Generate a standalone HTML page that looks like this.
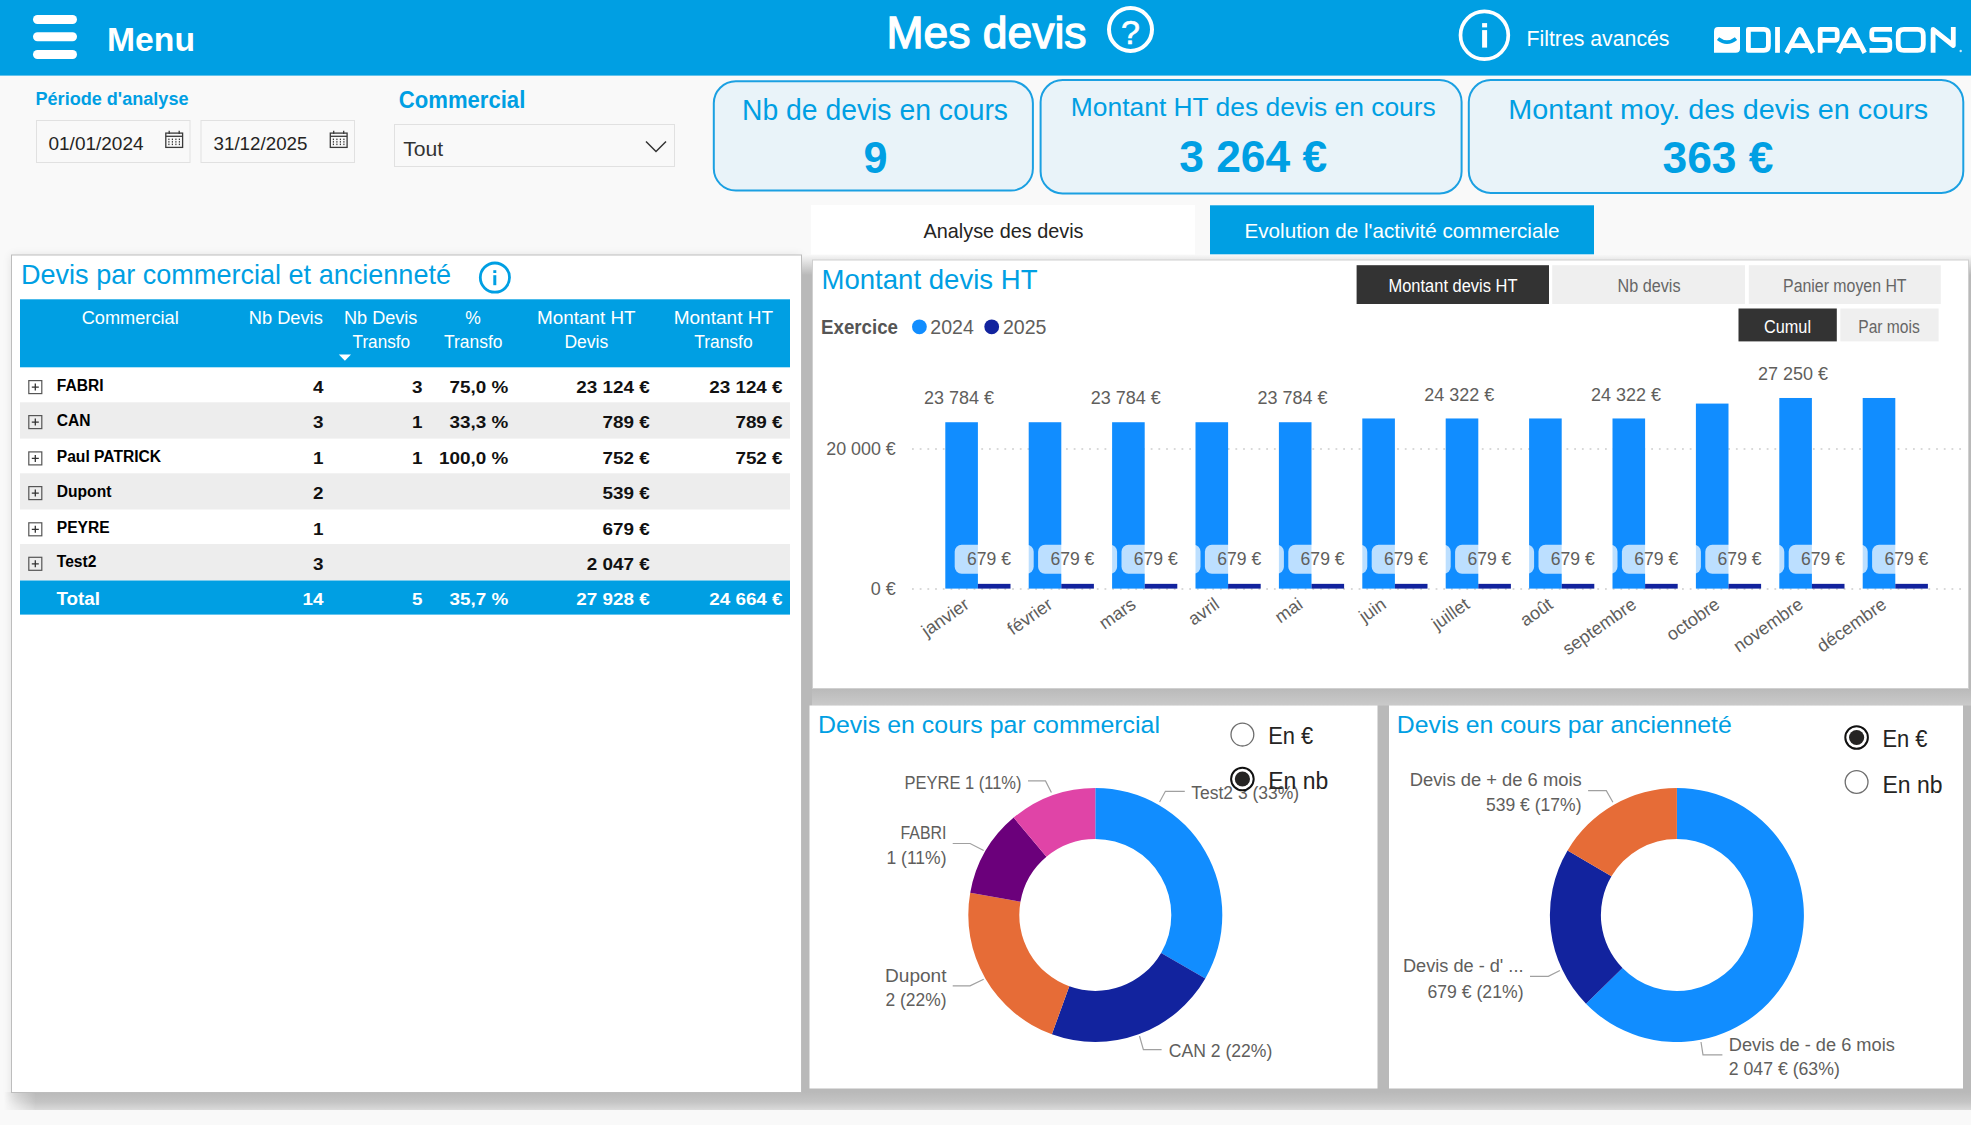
<!DOCTYPE html>
<html lang="fr"><head><meta charset="utf-8"><title>Mes devis</title>
<style>
html,body{margin:0;padding:0;width:1971px;height:1125px;overflow:hidden;background:#F9F9F9;}
svg{display:block;font-family:"Liberation Sans",sans-serif;}
</style></head><body>
<svg width="1971" height="1125" viewBox="0 0 1971 1125">
<rect x="0" y="0" width="1971" height="1125" fill="#F9F9F9" />
<rect x="0" y="0" width="1971" height="75.6" fill="#009FE3" />
<defs>
<linearGradient id="gtop" x1="0" y1="0" x2="0" y2="1"><stop offset="0" stop-color="#F7F7F7"/><stop offset="1" stop-color="#B9B9B9"/></linearGradient>
<linearGradient id="gbot" x1="0" y1="0" x2="0" y2="1"><stop offset="0" stop-color="#B9B9B9"/><stop offset="0.55" stop-color="#C4C4C4"/><stop offset="1" stop-color="#DADADA"/></linearGradient>
<linearGradient id="gleft" x1="0" y1="0" x2="1" y2="0"><stop offset="0" stop-color="#F9F9F9"/><stop offset="1" stop-color="#BBBBBB"/></linearGradient>
<linearGradient id="gside" x1="0" y1="0" x2="1" y2="0"><stop offset="0" stop-color="#F9F9F9"/><stop offset="1" stop-color="#EFEFEF"/></linearGradient>
</defs>
<filter id="sblur" x="-5%" y="-5%" width="110%" height="110%"><feGaussianBlur stdDeviation="5"/></filter>
<rect x="11" y="255" width="790" height="845" fill="#000" opacity="0.09" filter="url(#sblur)"/>
<rect x="802" y="255" width="1169" height="20" fill="url(#gtop)" />
<rect x="802" y="275" width="1169" height="818" fill="#B9B9B9" />
<linearGradient id="ggap" x1="0" y1="0" x2="0" y2="1"><stop offset="0" stop-color="#B9B9B9"/><stop offset="1" stop-color="#CACACA"/></linearGradient>
<rect x="812" y="688" width="1159" height="17.5" fill="url(#ggap)" />
<mask id="mleft"><rect x="0" y="1080" width="1971" height="40" fill="url(#gmask)"/></mask>
<linearGradient id="gmask" x1="0" y1="0" x2="1971" y2="0" gradientUnits="userSpaceOnUse"><stop offset="0.002" stop-color="#000"/><stop offset="0.018" stop-color="#fff"/></linearGradient>
<rect x="0" y="1092" width="1971" height="18" fill="url(#gbot)" mask="url(#mleft)"/>
<rect x="11.5" y="255" width="790" height="837.5" fill="#FFFFFF" stroke="#BDBDBD" stroke-width="1"/>
<rect x="811" y="205" width="384" height="49.5" fill="#FFFFFF" />
<rect x="1210" y="205.3" width="384" height="49" fill="#009FE3" />
<rect x="812.5" y="260" width="1156" height="428.5" fill="#FFFFFF" stroke="#D0D0D0" stroke-width="1"/>
<rect x="809.5" y="705.5" width="568" height="383" fill="#FFFFFF" />
<rect x="1389" y="705.5" width="574" height="383" fill="#FFFFFF" />
<rect x="33" y="15" width="44" height="9" rx="4.5" fill="#fff"/>
<rect x="33" y="32.3" width="44" height="9" rx="4.5" fill="#fff"/>
<rect x="33" y="50" width="44" height="9" rx="4.5" fill="#fff"/>
<text x="107" y="51.4" font-size="34" fill="#fff" font-weight="700" text-anchor="start" textLength="88" lengthAdjust="spacingAndGlyphs" >Menu</text>
<text x="886.5" y="47.9" font-size="44.5" fill="#fff" font-weight="400" text-anchor="start" textLength="200" lengthAdjust="spacingAndGlyphs" stroke="#fff" stroke-width="1.3">Mes devis</text>
<circle cx="1130.5" cy="29.5" r="21.5" fill="none" stroke="#fff" stroke-width="4"/>
<text x="1130.5" y="43.5" font-size="34" fill="#fff" font-weight="400" text-anchor="middle" stroke="#fff" stroke-width="0.6">?</text>
<circle cx="1484.4" cy="35.3" r="23.9" fill="none" stroke="#fff" stroke-width="3.7"/>
<rect x="1482.1" y="23.1" width="5" height="4.3" fill="#fff"/><rect x="1482.1" y="30.1" width="5" height="17.5" fill="#fff"/>
<text x="1526.5" y="45.8" font-size="22.5" fill="#fff" font-weight="400" text-anchor="start" textLength="143" lengthAdjust="spacingAndGlyphs" >Filtres avancés</text>
<g fill="#fff">
<path d="M1718 27 H1740 V48.5 Q1740 52.8 1735.7 52.8 H1714 V31.3 Q1714 27 1718 27 Z"/>
</g>
<path d="M1718 38.6 Q1727 45.5 1736 38.6" fill="none" stroke="#009FE3" stroke-width="3.6"/>
<g fill="none" stroke="#fff" stroke-width="4.8" stroke-linejoin="round">
<path d="M1748.4 29.4 H1764 Q1768.4 29.4 1768.4 34 V45.8 Q1768.4 50.4 1764 50.4 H1748.4 Z"/>
<path d="M1777.5 27 V52.8"/>
<path d="M1786.5 52.8 L1798.6 30.2 Q1799.8 28.6 1801.2 30.2 L1813 52.8 M1791.5 45.7 H1808.5"/>
<path d="M1820.2 52.8 V29.4 H1834.5 Q1837.2 29.4 1837.2 32.2 V37.4 Q1837.2 40.3 1834.5 40.3 H1820.2"/>
<path d="M1838.2 52.8 L1850.3 30.2 Q1851.5 28.6 1852.9 30.2 L1864.7 52.8 M1843.2 45.7 H1860.2"/>
<path d="M1892 29.4 H1874.5 Q1871.8 29.4 1871.8 32.2 V36.8 Q1871.8 39.6 1874.5 39.6 H1887 Q1889.8 39.6 1889.8 42.4 V47.6 Q1889.8 50.4 1887 50.4 H1869.5"/>
<path d="M1904 29.4 H1917.5 Q1923.3 29.4 1923.3 35.4 V44.4 Q1923.3 50.4 1917.5 50.4 H1904 Q1898.2 50.4 1898.2 44.4 V35.4 Q1898.2 29.4 1904 29.4 Z"/>
<path d="M1933.1 52.8 V29.4 L1953.3 45.5 V27"/>
</g>
<circle cx="1960.7" cy="51" r="1.2" fill="#cfe9f8"/>
<text x="35.5" y="104.9" font-size="18.7" fill="#009FE3" font-weight="700" text-anchor="start" textLength="153" lengthAdjust="spacingAndGlyphs" >Période d'analyse</text>
<rect x="36.5" y="120.5" width="153.5" height="42" fill="#F9F9F9" stroke="#E1E1E1" stroke-width="1"/>
<text x="48.5" y="149.6" font-size="18.2" fill="#252423" font-weight="400" text-anchor="start" textLength="95" lengthAdjust="spacingAndGlyphs" >01/01/2024</text>
<g fill="none" stroke="#3A3A3A" stroke-width="1.3"><rect x="165.79999999999998" y="133.1" width="16.8" height="14.3"/><line x1="165.79999999999998" y1="136.3" x2="182.6" y2="136.3"/><line x1="169.2" y1="130.8" x2="169.2" y2="134"/><line x1="179.2" y1="130.8" x2="179.2" y2="134"/></g><rect x="168.29999999999998" y="138.6" width="1.2" height="1.5" fill="#3A3A3A"/><rect x="168.29999999999998" y="141.1" width="1.2" height="1.5" fill="#3A3A3A"/><rect x="168.29999999999998" y="143.6" width="1.2" height="1.5" fill="#3A3A3A"/><rect x="171.79999999999998" y="138.6" width="1.2" height="1.5" fill="#3A3A3A"/><rect x="171.79999999999998" y="141.1" width="1.2" height="1.5" fill="#3A3A3A"/><rect x="171.79999999999998" y="143.6" width="1.2" height="1.5" fill="#3A3A3A"/><rect x="175.29999999999998" y="138.6" width="1.2" height="1.5" fill="#3A3A3A"/><rect x="175.29999999999998" y="141.1" width="1.2" height="1.5" fill="#3A3A3A"/><rect x="175.29999999999998" y="143.6" width="1.2" height="1.5" fill="#3A3A3A"/><rect x="178.79999999999998" y="138.6" width="1.2" height="1.5" fill="#3A3A3A"/><rect x="178.79999999999998" y="141.1" width="1.2" height="1.5" fill="#3A3A3A"/><rect x="178.79999999999998" y="143.6" width="1.2" height="1.5" fill="#3A3A3A"/>
<rect x="201.0" y="120.5" width="153.5" height="42" fill="#F9F9F9" stroke="#E1E1E1" stroke-width="1"/>
<text x="213.5" y="149.6" font-size="18.2" fill="#252423" font-weight="400" text-anchor="start" textLength="94" lengthAdjust="spacingAndGlyphs" >31/12/2025</text>
<g fill="none" stroke="#3A3A3A" stroke-width="1.3"><rect x="330.3" y="133.1" width="16.8" height="14.3"/><line x1="330.3" y1="136.3" x2="347.09999999999997" y2="136.3"/><line x1="333.7" y1="130.8" x2="333.7" y2="134"/><line x1="343.7" y1="130.8" x2="343.7" y2="134"/></g><rect x="332.8" y="138.6" width="1.2" height="1.5" fill="#3A3A3A"/><rect x="332.8" y="141.1" width="1.2" height="1.5" fill="#3A3A3A"/><rect x="332.8" y="143.6" width="1.2" height="1.5" fill="#3A3A3A"/><rect x="336.3" y="138.6" width="1.2" height="1.5" fill="#3A3A3A"/><rect x="336.3" y="141.1" width="1.2" height="1.5" fill="#3A3A3A"/><rect x="336.3" y="143.6" width="1.2" height="1.5" fill="#3A3A3A"/><rect x="339.8" y="138.6" width="1.2" height="1.5" fill="#3A3A3A"/><rect x="339.8" y="141.1" width="1.2" height="1.5" fill="#3A3A3A"/><rect x="339.8" y="143.6" width="1.2" height="1.5" fill="#3A3A3A"/><rect x="343.3" y="138.6" width="1.2" height="1.5" fill="#3A3A3A"/><rect x="343.3" y="141.1" width="1.2" height="1.5" fill="#3A3A3A"/><rect x="343.3" y="143.6" width="1.2" height="1.5" fill="#3A3A3A"/>
<text x="398.8" y="108.1" font-size="23.3" fill="#009FE3" font-weight="700" text-anchor="start" textLength="126.5" lengthAdjust="spacingAndGlyphs" >Commercial</text>
<rect x="394.5" y="124.5" width="280" height="42" fill="#F9F9F9" stroke="#E1E1E1" stroke-width="1"/>
<text x="403.2" y="155.5" font-size="20.4" fill="#333" font-weight="400" text-anchor="start" textLength="40" lengthAdjust="spacingAndGlyphs" >Tout</text>
<path d="M646 141.5 L656 151.5 L666 141.5" fill="none" stroke="#333" stroke-width="1.5"/>
<rect x="713.8" y="81.3" width="319.10000000000014" height="109.3" rx="22" fill="#E9F3F9" stroke="#1BA0E2" stroke-width="2"/>
<rect x="1040.6" y="80.1" width="421.0" height="113.30000000000001" rx="22" fill="#E9F3F9" stroke="#1BA0E2" stroke-width="2"/>
<rect x="1468.8" y="80.1" width="494.5" height="112.80000000000001" rx="22" fill="#E9F3F9" stroke="#1BA0E2" stroke-width="2"/>
<text x="742" y="120.0" font-size="29" fill="#009FE3" font-weight="400" text-anchor="start" textLength="266" lengthAdjust="spacingAndGlyphs" >Nb de devis en cours</text>
<text x="863.5" y="173.0" font-size="44" fill="#009FE3" font-weight="700" text-anchor="start" textLength="24" lengthAdjust="spacingAndGlyphs" >9</text>
<text x="1070.8" y="116.3" font-size="26.5" fill="#009FE3" font-weight="400" text-anchor="start" textLength="365" lengthAdjust="spacingAndGlyphs" >Montant HT des devis en cours</text>
<text x="1179.2" y="171.6" font-size="43.7" fill="#009FE3" font-weight="700" text-anchor="start" textLength="148" lengthAdjust="spacingAndGlyphs" >3 264 €</text>
<text x="1508.2" y="118.7" font-size="28" fill="#009FE3" font-weight="400" text-anchor="start" textLength="420" lengthAdjust="spacingAndGlyphs" >Montant moy. des devis en cours</text>
<text x="1662.5" y="173.2" font-size="43.6" fill="#009FE3" font-weight="700" text-anchor="start" textLength="111" lengthAdjust="spacingAndGlyphs" >363 €</text>
<text x="923.5" y="237.6" font-size="20.4" fill="#252423" font-weight="400" text-anchor="start" textLength="160" lengthAdjust="spacingAndGlyphs" >Analyse des devis</text>
<text x="1244.5" y="237.6" font-size="20.4" fill="#fff" font-weight="400" text-anchor="start" textLength="315" lengthAdjust="spacingAndGlyphs" >Evolution de l'activité commerciale</text>
<text x="21" y="284.3" font-size="27.2" fill="#009FE3" font-weight="400" text-anchor="start" textLength="430" lengthAdjust="spacingAndGlyphs" >Devis par commercial et ancienneté</text>
<circle cx="494.9" cy="277.6" r="14.6" fill="none" stroke="#009FE3" stroke-width="2.8"/>
<rect x="493.3" y="270.2" width="3" height="2.8" fill="#009FE3"/><rect x="493.3" y="275.2" width="3" height="10" fill="#009FE3"/>
<rect x="20" y="299.3" width="770" height="68" fill="#009FE3" />
<text x="130.2" y="323.5" font-size="17.5" fill="#fff" font-weight="400" text-anchor="middle" textLength="97" lengthAdjust="spacingAndGlyphs" >Commercial</text>
<text x="285.8" y="323.5" font-size="17.5" fill="#fff" font-weight="400" text-anchor="middle" textLength="74" lengthAdjust="spacingAndGlyphs" >Nb Devis</text>
<text x="380.7" y="323.5" font-size="17.5" fill="#fff" font-weight="400" text-anchor="middle" textLength="73.5" lengthAdjust="spacingAndGlyphs" >Nb Devis</text>
<text x="381.3" y="348.3" font-size="17.5" fill="#fff" font-weight="400" text-anchor="middle" textLength="57.5" lengthAdjust="spacingAndGlyphs" >Transfo</text>
<text x="473" y="323.5" font-size="17.5" fill="#fff" font-weight="400" text-anchor="middle" >%</text>
<text x="473.2" y="348.3" font-size="17.5" fill="#fff" font-weight="400" text-anchor="middle" textLength="58.5" lengthAdjust="spacingAndGlyphs" >Transfo</text>
<text x="586.3" y="323.5" font-size="17.5" fill="#fff" font-weight="400" text-anchor="middle" textLength="98.5" lengthAdjust="spacingAndGlyphs" >Montant HT</text>
<text x="586.3" y="348.3" font-size="17.5" fill="#fff" font-weight="400" text-anchor="middle" >Devis</text>
<text x="723.4" y="323.5" font-size="17.5" fill="#fff" font-weight="400" text-anchor="middle" textLength="99.5" lengthAdjust="spacingAndGlyphs" >Montant HT</text>
<text x="723.4" y="348.3" font-size="17.5" fill="#fff" font-weight="400" text-anchor="middle" textLength="58.5" lengthAdjust="spacingAndGlyphs" >Transfo</text>
<path d="M338.8 354.4 L351 354.4 L344.9 360.8 Z" fill="#fff"/>
<rect x="28.8" y="380.6" width="13" height="13" fill="none" stroke="#555" stroke-width="1.2"/><path d="M31.8 387.1 H38.8 M35.3 383.6 V390.6" stroke="#333" stroke-width="1.3"/>
<text x="56.8" y="390.5" font-size="15.6" fill="#000" font-weight="700" text-anchor="start" >FABRI</text>
<text x="323.40000000000003" y="393.0" font-size="17.3" fill="#111" font-weight="700" text-anchor="end" textLength="10.5" lengthAdjust="spacingAndGlyphs" >4</text>
<text x="422.5" y="393.0" font-size="17.3" fill="#111" font-weight="700" text-anchor="end" textLength="10.5" lengthAdjust="spacingAndGlyphs" >3</text>
<text x="508.2" y="393.0" font-size="17.3" fill="#111" font-weight="700" text-anchor="end" textLength="58.7" lengthAdjust="spacingAndGlyphs" >75,0 %</text>
<text x="649.6999999999999" y="393.0" font-size="17.3" fill="#111" font-weight="700" text-anchor="end" textLength="73.4" lengthAdjust="spacingAndGlyphs" >23 124 €</text>
<text x="782.5999999999999" y="393.0" font-size="17.3" fill="#111" font-weight="700" text-anchor="end" textLength="73.4" lengthAdjust="spacingAndGlyphs" >23 124 €</text>
<rect x="20" y="402.3" width="770" height="36.30000000000001" fill="#EDEDED" />
<rect x="28.8" y="415.6" width="13" height="13" fill="none" stroke="#555" stroke-width="1.2"/><path d="M31.8 422.1 H38.8 M35.3 418.6 V425.6" stroke="#333" stroke-width="1.3"/>
<text x="56.8" y="425.5" font-size="15.6" fill="#000" font-weight="700" text-anchor="start" >CAN</text>
<text x="323.40000000000003" y="428.0" font-size="17.3" fill="#111" font-weight="700" text-anchor="end" textLength="10.5" lengthAdjust="spacingAndGlyphs" >3</text>
<text x="422.5" y="428.0" font-size="17.3" fill="#111" font-weight="700" text-anchor="end" textLength="10.5" lengthAdjust="spacingAndGlyphs" >1</text>
<text x="508.2" y="428.0" font-size="17.3" fill="#111" font-weight="700" text-anchor="end" textLength="58.7" lengthAdjust="spacingAndGlyphs" >33,3 %</text>
<text x="649.6999999999999" y="428.0" font-size="17.3" fill="#111" font-weight="700" text-anchor="end" textLength="47.2" lengthAdjust="spacingAndGlyphs" >789 €</text>
<text x="782.5999999999999" y="428.0" font-size="17.3" fill="#111" font-weight="700" text-anchor="end" textLength="47.2" lengthAdjust="spacingAndGlyphs" >789 €</text>
<rect x="28.8" y="451.90000000000003" width="13" height="13" fill="none" stroke="#555" stroke-width="1.2"/><path d="M31.8 458.40000000000003 H38.8 M35.3 454.90000000000003 V461.90000000000003" stroke="#333" stroke-width="1.3"/>
<text x="56.8" y="461.8" font-size="15.6" fill="#000" font-weight="700" text-anchor="start" >Paul PATRICK</text>
<text x="323.40000000000003" y="464.3" font-size="17.3" fill="#111" font-weight="700" text-anchor="end" textLength="10.5" lengthAdjust="spacingAndGlyphs" >1</text>
<text x="422.5" y="464.3" font-size="17.3" fill="#111" font-weight="700" text-anchor="end" textLength="10.5" lengthAdjust="spacingAndGlyphs" >1</text>
<text x="508.2" y="464.3" font-size="17.3" fill="#111" font-weight="700" text-anchor="end" textLength="69.2" lengthAdjust="spacingAndGlyphs" >100,0 %</text>
<text x="649.6999999999999" y="464.3" font-size="17.3" fill="#111" font-weight="700" text-anchor="end" textLength="47.2" lengthAdjust="spacingAndGlyphs" >752 €</text>
<text x="782.5999999999999" y="464.3" font-size="17.3" fill="#111" font-weight="700" text-anchor="end" textLength="47.2" lengthAdjust="spacingAndGlyphs" >752 €</text>
<rect x="20" y="473.3" width="770" height="36.19999999999999" fill="#EDEDED" />
<rect x="28.8" y="486.6" width="13" height="13" fill="none" stroke="#555" stroke-width="1.2"/><path d="M31.8 493.1 H38.8 M35.3 489.6 V496.6" stroke="#333" stroke-width="1.3"/>
<text x="56.8" y="496.5" font-size="15.6" fill="#000" font-weight="700" text-anchor="start" >Dupont</text>
<text x="323.40000000000003" y="499.0" font-size="17.3" fill="#111" font-weight="700" text-anchor="end" textLength="10.5" lengthAdjust="spacingAndGlyphs" >2</text>
<text x="649.6999999999999" y="499.0" font-size="17.3" fill="#111" font-weight="700" text-anchor="end" textLength="47.2" lengthAdjust="spacingAndGlyphs" >539 €</text>
<rect x="28.8" y="522.8" width="13" height="13" fill="none" stroke="#555" stroke-width="1.2"/><path d="M31.8 529.3 H38.8 M35.3 525.8 V532.8" stroke="#333" stroke-width="1.3"/>
<text x="56.8" y="532.7" font-size="15.6" fill="#000" font-weight="700" text-anchor="start" >PEYRE</text>
<text x="323.40000000000003" y="535.2" font-size="17.3" fill="#111" font-weight="700" text-anchor="end" textLength="10.5" lengthAdjust="spacingAndGlyphs" >1</text>
<text x="649.6999999999999" y="535.2" font-size="17.3" fill="#111" font-weight="700" text-anchor="end" textLength="47.2" lengthAdjust="spacingAndGlyphs" >679 €</text>
<rect x="20" y="544.0" width="770" height="36.5" fill="#EDEDED" />
<rect x="28.8" y="557.3" width="13" height="13" fill="none" stroke="#555" stroke-width="1.2"/><path d="M31.8 563.8 H38.8 M35.3 560.3 V567.3" stroke="#333" stroke-width="1.3"/>
<text x="56.8" y="567.2" font-size="15.6" fill="#000" font-weight="700" text-anchor="start" >Test2</text>
<text x="323.40000000000003" y="569.7" font-size="17.3" fill="#111" font-weight="700" text-anchor="end" textLength="10.5" lengthAdjust="spacingAndGlyphs" >3</text>
<text x="649.6999999999999" y="569.7" font-size="17.3" fill="#111" font-weight="700" text-anchor="end" textLength="62.9" lengthAdjust="spacingAndGlyphs" >2 047 €</text>
<rect x="20" y="580.5" width="770" height="34.1" fill="#009FE3" />
<text x="56.5" y="605.3" font-size="18" fill="#fff" font-weight="700" text-anchor="start" textLength="43.5" lengthAdjust="spacingAndGlyphs" >Total</text>
<text x="323.40000000000003" y="605.3" font-size="17.3" fill="#fff" font-weight="700" text-anchor="end" textLength="21.0" lengthAdjust="spacingAndGlyphs" >14</text>
<text x="422.5" y="605.3" font-size="17.3" fill="#fff" font-weight="700" text-anchor="end" textLength="10.5" lengthAdjust="spacingAndGlyphs" >5</text>
<text x="508.2" y="605.3" font-size="17.3" fill="#fff" font-weight="700" text-anchor="end" textLength="58.7" lengthAdjust="spacingAndGlyphs" >35,7 %</text>
<text x="649.6999999999999" y="605.3" font-size="17.3" fill="#fff" font-weight="700" text-anchor="end" textLength="73.4" lengthAdjust="spacingAndGlyphs" >27 928 €</text>
<text x="782.5999999999999" y="605.3" font-size="17.3" fill="#fff" font-weight="700" text-anchor="end" textLength="73.4" lengthAdjust="spacingAndGlyphs" >24 664 €</text>
<text x="821.5" y="289.2" font-size="27.2" fill="#009FE3" font-weight="400" text-anchor="start" textLength="216" lengthAdjust="spacingAndGlyphs" >Montant devis HT</text>
<rect x="1356.6" y="265.2" width="192.4" height="38.8" fill="#333333" />
<rect x="1552.2" y="265.2" width="192.8" height="38.8" fill="#EFEFEF" />
<rect x="1748.8" y="265.2" width="192" height="38.8" fill="#EFEFEF" />
<text x="1453" y="291.9" font-size="17.5" fill="#fff" font-weight="400" text-anchor="middle" textLength="129" lengthAdjust="spacingAndGlyphs" >Montant devis HT</text>
<text x="1649" y="291.9" font-size="17.5" fill="#666" font-weight="400" text-anchor="middle" textLength="63" lengthAdjust="spacingAndGlyphs" >Nb devis</text>
<text x="1844.8" y="291.9" font-size="17.5" fill="#666" font-weight="400" text-anchor="middle" textLength="123.5" lengthAdjust="spacingAndGlyphs" >Panier moyen HT</text>
<rect x="1738.5" y="308.5" width="98.3" height="32.9" fill="#333333" />
<rect x="1840.3" y="308.5" width="98.3" height="32.9" fill="#EFEFEF" />
<text x="1787.5" y="332.5" font-size="17.5" fill="#fff" font-weight="400" text-anchor="middle" textLength="47" lengthAdjust="spacingAndGlyphs" >Cumul</text>
<text x="1889" y="332.5" font-size="17.5" fill="#666" font-weight="400" text-anchor="middle" textLength="61.5" lengthAdjust="spacingAndGlyphs" >Par mois</text>
<text x="821" y="334.1" font-size="19.5" fill="#555" font-weight="700" text-anchor="start" textLength="77" lengthAdjust="spacingAndGlyphs" >Exercice</text>
<circle cx="919.4" cy="326.8" r="7.4" fill="#118DFF"/><circle cx="991.7" cy="326.8" r="7.4" fill="#12239E"/>
<text x="930.3" y="334.1" font-size="19.5" fill="#605E5C" font-weight="400" text-anchor="start" textLength="43.5" lengthAdjust="spacingAndGlyphs" >2024</text>
<text x="1002.9" y="334.1" font-size="19.5" fill="#605E5C" font-weight="400" text-anchor="start" textLength="43.5" lengthAdjust="spacingAndGlyphs" >2025</text>
<g stroke="#CDCDCD" stroke-width="1.6" stroke-dasharray="1.8 5.9"><line x1="912" y1="449" x2="1965" y2="449"/><line x1="912" y1="589" x2="1965" y2="589"/></g>
<text x="895.8" y="454.5" font-size="18" fill="#605E5C" font-weight="400" text-anchor="end" textLength="69.5" lengthAdjust="spacingAndGlyphs" >20 000 €</text>
<text x="895.8" y="594.5" font-size="18" fill="#605E5C" font-weight="400" text-anchor="end" textLength="25" lengthAdjust="spacingAndGlyphs" >0 €</text>
<rect x="945.3" y="422.23092" width="32.6" height="166.36908" fill="#118DFF" />
<rect x="977.9" y="583.850395" width="32.6" height="4.749605" fill="#12239E" />
<rect x="1028.7" y="422.23092" width="32.6" height="166.36908" fill="#118DFF" />
<rect x="1061.3" y="583.850395" width="32.6" height="4.749605" fill="#12239E" />
<rect x="1112.1" y="422.23092" width="32.6" height="166.36908" fill="#118DFF" />
<rect x="1144.6999999999998" y="583.850395" width="32.6" height="4.749605" fill="#12239E" />
<rect x="1195.5" y="422.23092" width="32.6" height="166.36908" fill="#118DFF" />
<rect x="1228.1" y="583.850395" width="32.6" height="4.749605" fill="#12239E" />
<rect x="1278.9" y="422.23092" width="32.6" height="166.36908" fill="#118DFF" />
<rect x="1311.5" y="583.850395" width="32.6" height="4.749605" fill="#12239E" />
<rect x="1362.3" y="418.46761000000004" width="32.6" height="170.13239000000002" fill="#118DFF" />
<rect x="1394.8999999999999" y="583.850395" width="32.6" height="4.749605" fill="#12239E" />
<rect x="1445.7" y="418.46761000000004" width="32.6" height="170.13239000000002" fill="#118DFF" />
<rect x="1478.3" y="583.850395" width="32.6" height="4.749605" fill="#12239E" />
<rect x="1529.1" y="418.46761000000004" width="32.6" height="170.13239000000002" fill="#118DFF" />
<rect x="1561.6999999999998" y="583.850395" width="32.6" height="4.749605" fill="#12239E" />
<rect x="1612.5" y="418.46761000000004" width="32.6" height="170.13239000000002" fill="#118DFF" />
<rect x="1645.1" y="583.850395" width="32.6" height="4.749605" fill="#12239E" />
<rect x="1695.9" y="403.58225000000004" width="32.6" height="185.01775" fill="#118DFF" />
<rect x="1728.5" y="583.850395" width="32.6" height="4.749605" fill="#12239E" />
<rect x="1779.3" y="397.98625000000004" width="32.6" height="190.61375" fill="#118DFF" />
<rect x="1811.8999999999999" y="583.850395" width="32.6" height="4.749605" fill="#12239E" />
<rect x="1862.7" y="397.98625000000004" width="32.6" height="190.61375" fill="#118DFF" />
<rect x="1895.3" y="583.850395" width="32.6" height="4.749605" fill="#12239E" />
<rect x="954.6999999999999" y="544.8" width="79" height="29" rx="7" fill="#fff" fill-opacity="0.72"/>
<text x="988.9999999999999" y="565.3" font-size="18" fill="#605E5C" font-weight="400" text-anchor="middle" textLength="44" lengthAdjust="spacingAndGlyphs" >679 €</text>
<text x="958.9" y="403.7" font-size="18" fill="#605E5C" font-weight="400" text-anchor="middle" textLength="70" lengthAdjust="spacingAndGlyphs" >23 784 €</text>
<text transform="translate(970.4,607) rotate(-35)" font-size="18" fill="#605E5C" text-anchor="end">janvier</text>
<rect x="1038.1" y="544.8" width="79" height="29" rx="7" fill="#fff" fill-opacity="0.72"/>
<text x="1072.3999999999999" y="565.3" font-size="18" fill="#605E5C" font-weight="400" text-anchor="middle" textLength="44" lengthAdjust="spacingAndGlyphs" >679 €</text>
<text transform="translate(1053.8,607) rotate(-35)" font-size="18" fill="#605E5C" text-anchor="end">février</text>
<rect x="1121.4999999999998" y="544.8" width="79" height="29" rx="7" fill="#fff" fill-opacity="0.72"/>
<text x="1155.7999999999997" y="565.3" font-size="18" fill="#605E5C" font-weight="400" text-anchor="middle" textLength="44" lengthAdjust="spacingAndGlyphs" >679 €</text>
<text x="1125.6999999999998" y="403.7" font-size="18" fill="#605E5C" font-weight="400" text-anchor="middle" textLength="70" lengthAdjust="spacingAndGlyphs" >23 784 €</text>
<text transform="translate(1137.1999999999998,607) rotate(-35)" font-size="18" fill="#605E5C" text-anchor="end">mars</text>
<rect x="1204.8999999999999" y="544.8" width="79" height="29" rx="7" fill="#fff" fill-opacity="0.72"/>
<text x="1239.1999999999998" y="565.3" font-size="18" fill="#605E5C" font-weight="400" text-anchor="middle" textLength="44" lengthAdjust="spacingAndGlyphs" >679 €</text>
<text transform="translate(1220.6,607) rotate(-35)" font-size="18" fill="#605E5C" text-anchor="end">avril</text>
<rect x="1288.3" y="544.8" width="79" height="29" rx="7" fill="#fff" fill-opacity="0.72"/>
<text x="1322.6" y="565.3" font-size="18" fill="#605E5C" font-weight="400" text-anchor="middle" textLength="44" lengthAdjust="spacingAndGlyphs" >679 €</text>
<text x="1292.5" y="403.7" font-size="18" fill="#605E5C" font-weight="400" text-anchor="middle" textLength="70" lengthAdjust="spacingAndGlyphs" >23 784 €</text>
<text transform="translate(1304.0,607) rotate(-35)" font-size="18" fill="#605E5C" text-anchor="end">mai</text>
<rect x="1371.6999999999998" y="544.8" width="79" height="29" rx="7" fill="#fff" fill-opacity="0.72"/>
<text x="1405.9999999999998" y="565.3" font-size="18" fill="#605E5C" font-weight="400" text-anchor="middle" textLength="44" lengthAdjust="spacingAndGlyphs" >679 €</text>
<text transform="translate(1387.3999999999999,607) rotate(-35)" font-size="18" fill="#605E5C" text-anchor="end">juin</text>
<rect x="1455.1" y="544.8" width="79" height="29" rx="7" fill="#fff" fill-opacity="0.72"/>
<text x="1489.3999999999999" y="565.3" font-size="18" fill="#605E5C" font-weight="400" text-anchor="middle" textLength="44" lengthAdjust="spacingAndGlyphs" >679 €</text>
<text x="1459.3" y="400.5" font-size="18" fill="#605E5C" font-weight="400" text-anchor="middle" textLength="70" lengthAdjust="spacingAndGlyphs" >24 322 €</text>
<text transform="translate(1470.8,607) rotate(-35)" font-size="18" fill="#605E5C" text-anchor="end">juillet</text>
<rect x="1538.4999999999998" y="544.8" width="79" height="29" rx="7" fill="#fff" fill-opacity="0.72"/>
<text x="1572.7999999999997" y="565.3" font-size="18" fill="#605E5C" font-weight="400" text-anchor="middle" textLength="44" lengthAdjust="spacingAndGlyphs" >679 €</text>
<text transform="translate(1554.1999999999998,607) rotate(-35)" font-size="18" fill="#605E5C" text-anchor="end">août</text>
<rect x="1621.8999999999999" y="544.8" width="79" height="29" rx="7" fill="#fff" fill-opacity="0.72"/>
<text x="1656.1999999999998" y="565.3" font-size="18" fill="#605E5C" font-weight="400" text-anchor="middle" textLength="44" lengthAdjust="spacingAndGlyphs" >679 €</text>
<text x="1626.1" y="400.5" font-size="18" fill="#605E5C" font-weight="400" text-anchor="middle" textLength="70" lengthAdjust="spacingAndGlyphs" >24 322 €</text>
<text transform="translate(1637.6,607) rotate(-35)" font-size="18" fill="#605E5C" text-anchor="end">septembre</text>
<rect x="1705.3" y="544.8" width="79" height="29" rx="7" fill="#fff" fill-opacity="0.72"/>
<text x="1739.6" y="565.3" font-size="18" fill="#605E5C" font-weight="400" text-anchor="middle" textLength="44" lengthAdjust="spacingAndGlyphs" >679 €</text>
<text transform="translate(1721.0,607) rotate(-35)" font-size="18" fill="#605E5C" text-anchor="end">octobre</text>
<rect x="1788.6999999999998" y="544.8" width="79" height="29" rx="7" fill="#fff" fill-opacity="0.72"/>
<text x="1822.9999999999998" y="565.3" font-size="18" fill="#605E5C" font-weight="400" text-anchor="middle" textLength="44" lengthAdjust="spacingAndGlyphs" >679 €</text>
<text x="1792.8999999999999" y="379.8" font-size="18" fill="#605E5C" font-weight="400" text-anchor="middle" textLength="70" lengthAdjust="spacingAndGlyphs" >27 250 €</text>
<text transform="translate(1804.3999999999999,607) rotate(-35)" font-size="18" fill="#605E5C" text-anchor="end">novembre</text>
<rect x="1872.1" y="544.8" width="79" height="29" rx="7" fill="#fff" fill-opacity="0.72"/>
<text x="1906.3999999999999" y="565.3" font-size="18" fill="#605E5C" font-weight="400" text-anchor="middle" textLength="44" lengthAdjust="spacingAndGlyphs" >679 €</text>
<text transform="translate(1887.8,607) rotate(-35)" font-size="18" fill="#605E5C" text-anchor="end">décembre</text>
<path d="M1095.30 787.90 A127 127 0 0 1 1205.29 978.40 L1161.12 952.90 A76 76 0 0 0 1095.30 838.90 Z" fill="#118DFF"/>
<path d="M1205.29 978.40 A127 127 0 0 1 1051.86 1034.24 L1069.31 986.32 A76 76 0 0 0 1161.12 952.90 Z" fill="#12239E"/>
<path d="M1051.86 1034.24 A127 127 0 0 1 970.23 892.85 L1020.45 901.70 A76 76 0 0 0 1069.31 986.32 Z" fill="#E66C37"/>
<path d="M970.23 892.85 A127 127 0 0 1 1013.67 817.61 L1046.45 856.68 A76 76 0 0 0 1020.45 901.70 Z" fill="#6B007B"/>
<path d="M1013.67 817.61 A127 127 0 0 1 1095.30 787.90 L1095.30 838.90 A76 76 0 0 0 1046.45 856.68 Z" fill="#E044A7"/>
<path d="M1676.90 788.00 A127 127 0 1 1 1586.00 1003.69 L1622.50 968.08 A76 76 0 1 0 1676.90 839.00 Z" fill="#118DFF"/>
<path d="M1586.00 1003.69 A127 127 0 0 1 1567.55 850.41 L1611.46 876.35 A76 76 0 0 0 1622.50 968.08 Z" fill="#12239E"/>
<path d="M1567.55 850.41 A127 127 0 0 1 1676.90 788.00 L1676.90 839.00 A76 76 0 0 0 1611.46 876.35 Z" fill="#E66C37"/>
<text x="818" y="732.5" font-size="24.5" fill="#009FE3" font-weight="400" text-anchor="start" textLength="342" lengthAdjust="spacingAndGlyphs" >Devis en cours par commercial</text>
<text x="1396.8" y="732.5" font-size="24.5" fill="#009FE3" font-weight="400" text-anchor="start" textLength="335" lengthAdjust="spacingAndGlyphs" >Devis en cours par ancienneté</text>
<text x="1021.5" y="788.6" font-size="18" fill="#605E5C" font-weight="400" text-anchor="end" textLength="117" lengthAdjust="spacingAndGlyphs" >PEYRE 1 (11%)</text>
<path d="M1028 780.9 L1045.5 780.9 L1051.4 792.5" fill="none" stroke="#A0A0A0" stroke-width="1.2"/>
<text x="946.5" y="838.9" font-size="18" fill="#605E5C" font-weight="400" text-anchor="end" textLength="46" lengthAdjust="spacingAndGlyphs" >FABRI</text>
<text x="946.5" y="864" font-size="18" fill="#605E5C" font-weight="400" text-anchor="end" textLength="60" lengthAdjust="spacingAndGlyphs" >1 (11%)</text>
<path d="M952.7 843.5 L970.1 843.5 L983.7 850.5" fill="none" stroke="#A0A0A0" stroke-width="1.2"/>
<text x="946.5" y="982" font-size="18" fill="#605E5C" font-weight="400" text-anchor="end" textLength="61.5" lengthAdjust="spacingAndGlyphs" >Dupont</text>
<text x="946.5" y="1006.3" font-size="18" fill="#605E5C" font-weight="400" text-anchor="end" textLength="61" lengthAdjust="spacingAndGlyphs" >2 (22%)</text>
<path d="M952.7 985.8 L970 985.8 L983.7 979.3" fill="none" stroke="#A0A0A0" stroke-width="1.2"/>
<text x="1168.8" y="1057.4" font-size="18" fill="#605E5C" font-weight="400" text-anchor="start" textLength="103.5" lengthAdjust="spacingAndGlyphs" >CAN 2 (22%)</text>
<path d="M1139.5 1036 L1143.4 1049.6 L1161.6 1049.6" fill="none" stroke="#A0A0A0" stroke-width="1.2"/>
<text x="1191.2" y="799" font-size="18" fill="#605E5C" font-weight="400" text-anchor="start" textLength="108" lengthAdjust="spacingAndGlyphs" >Test2 3 (33%)</text>
<path d="M1159.6 802 L1165.4 791.3 L1184.8 791.3" fill="none" stroke="#A0A0A0" stroke-width="1.2"/>
<text x="1409.7" y="786" font-size="18" fill="#605E5C" font-weight="400" text-anchor="start" textLength="172" lengthAdjust="spacingAndGlyphs" >Devis de + de 6 mois</text>
<text x="1581.5" y="810.7" font-size="18" fill="#605E5C" font-weight="400" text-anchor="end" textLength="95.5" lengthAdjust="spacingAndGlyphs" >539 € (17%)</text>
<path d="M1588.1 790.6 L1606.3 790.6 L1612.9 802.2" fill="none" stroke="#A0A0A0" stroke-width="1.2"/>
<text x="1523.5" y="972.4" font-size="18" fill="#605E5C" font-weight="400" text-anchor="end" textLength="120.5" lengthAdjust="spacingAndGlyphs" >Devis de - d' ...</text>
<text x="1523.5" y="997.5" font-size="18" fill="#605E5C" font-weight="400" text-anchor="end" textLength="96" lengthAdjust="spacingAndGlyphs" >679 € (21%)</text>
<path d="M1530 976.3 L1548.3 976.3 L1559.9 970.5" fill="none" stroke="#A0A0A0" stroke-width="1.2"/>
<text x="1728.8" y="1050.8" font-size="18" fill="#605E5C" font-weight="400" text-anchor="start" textLength="166" lengthAdjust="spacingAndGlyphs" >Devis de - de 6 mois</text>
<text x="1728.8" y="1075.1" font-size="18" fill="#605E5C" font-weight="400" text-anchor="start" textLength="111" lengthAdjust="spacingAndGlyphs" >2 047 € (63%)</text>
<path d="M1701 1042 L1703 1054.8 L1722.4 1054.8" fill="none" stroke="#A0A0A0" stroke-width="1.2"/>
<circle cx="1242.4" cy="734.6" r="11.4" fill="none" stroke="#6E6E6E" stroke-width="1.3"/>
<text x="1268.2" y="744.1" font-size="23.5" fill="#252423" font-weight="400" text-anchor="start" textLength="45" lengthAdjust="spacingAndGlyphs" >En €</text>
<circle cx="1242.4" cy="779" r="11.3" fill="#fff" stroke="#111" stroke-width="2"/>
<circle cx="1242.4" cy="779" r="7.6" fill="#252423"/>
<text x="1268.2" y="788.6" font-size="23.5" fill="#252423" font-weight="400" text-anchor="start" textLength="60" lengthAdjust="spacingAndGlyphs" >En nb</text>
<circle cx="1856.6" cy="737.5" r="11.3" fill="#fff" stroke="#111" stroke-width="2"/>
<circle cx="1856.6" cy="737.5" r="7.6" fill="#252423"/>
<text x="1882.5" y="747.3" font-size="23.5" fill="#252423" font-weight="400" text-anchor="start" textLength="45" lengthAdjust="spacingAndGlyphs" >En €</text>
<circle cx="1856.6" cy="782" r="11.4" fill="none" stroke="#6E6E6E" stroke-width="1.3"/>
<text x="1882.5" y="792.5" font-size="23.5" fill="#252423" font-weight="400" text-anchor="start" textLength="60" lengthAdjust="spacingAndGlyphs" >En nb</text>
</svg>
</body></html>
